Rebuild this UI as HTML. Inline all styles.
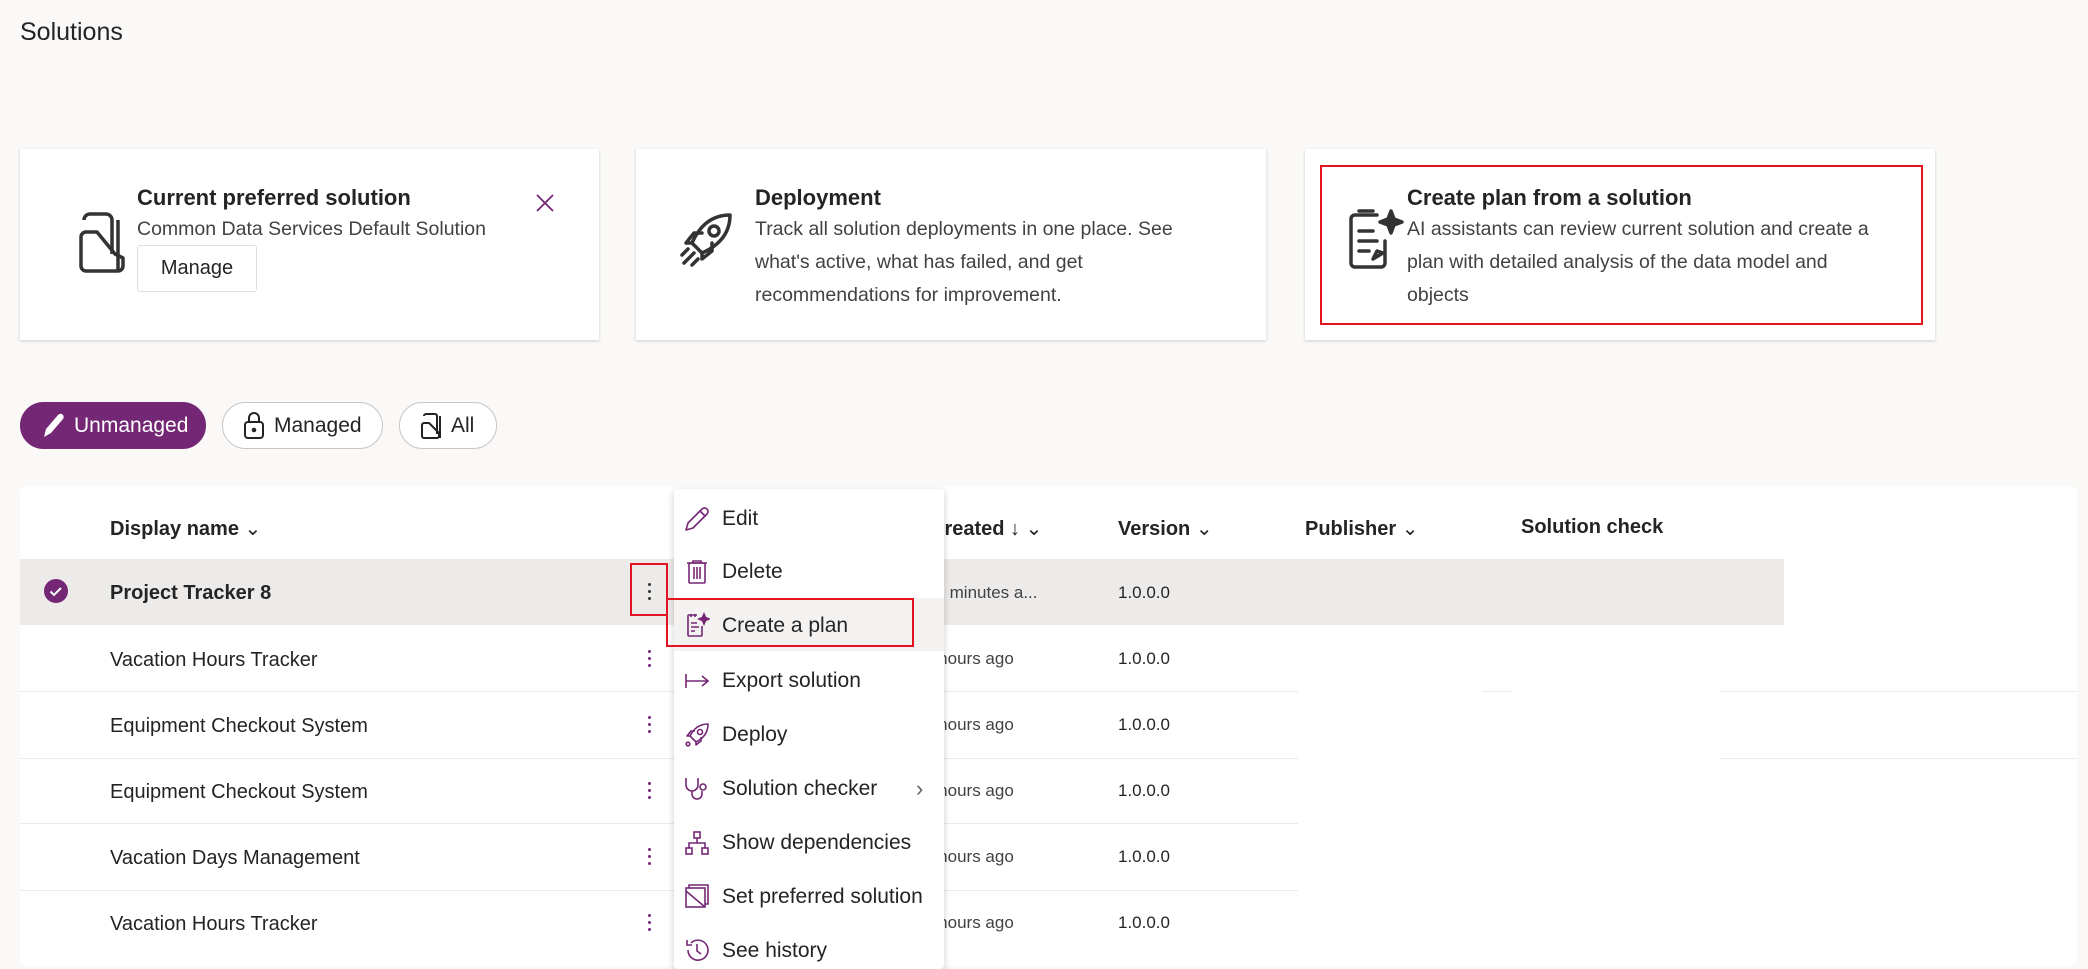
<!DOCTYPE html>
<html><head><meta charset="utf-8"><style>
*{margin:0;padding:0;box-sizing:border-box}
body{width:2088px;height:960px;overflow:hidden;background:#faf9f8;font-family:"Liberation Sans",sans-serif;color:#242424;position:relative}
.a{position:absolute;white-space:nowrap}
.card{position:absolute;top:149px;height:191px;background:#fff;box-shadow:0 1px 3px rgba(0,0,0,.18)}
.t{font-size:22px;font-weight:bold;color:#242424}
.s{font-size:19.5px;color:#424242;line-height:33px}
.pill{position:absolute;top:402px;height:47px;border-radius:24px;border:1px solid #c8c6c4;background:#fff;font-size:21px;display:flex;align-items:center;gap:9px;padding-left:20px}
.hd{font-size:20px;font-weight:bold;top:514px}
.cell{font-size:20px}
.sm{font-size:17px;color:#424242}
.dots{position:absolute;left:648px;width:4px}
.dots i{display:block;width:3px;height:3px;background:#742774;border-radius:50%;margin:4px 0}
.mi{position:absolute;left:722px;font-size:21px;color:#242424}
.ic{position:absolute;left:684px}
</style></head><body>
<div class="a" style="left:20px;top:18px;font-size:25px">Solutions</div>

<div class="card" style="left:20px;width:579px">
 <svg class="a" style="left:58px;top:63px" width="54" height="62" viewBox="0 0 54 62" fill="none" stroke="#333" stroke-width="3.5" stroke-linejoin="round"><path d="M6 8a6 6 0 0 1 6-6h16a6 6 0 0 1 6 6v34"/><path d="M40 8v50"/><path d="M3 28v26a5 5 0 0 0 5 5h32a5 5 0 0 0 5-5v-8l-8-4-18-22H8a5 5 0 0 0-5 5z"/></svg>
 <div class="a t" style="left:117px;top:36px">Current preferred solution</div>
 <div class="a s" style="left:117px;top:64px">Common Data Services Default Solution</div>
 <div class="a" style="left:117px;top:96px;width:120px;height:47px;border:1px solid #e1dfdd;border-radius:3px;font-size:20px;display:flex;align-items:center;justify-content:center">Manage</div>
 <svg class="a" style="left:515px;top:44px" width="20" height="20" viewBox="0 0 20 20" stroke="#742774" stroke-width="1.8"><path d="M2 2L18 18M18 2L2 18"/></svg>
</div>

<div class="card" style="left:636px;width:630px">
 <svg class="a" style="left:42px;top:62px" width="56" height="56" viewBox="0 0 56 56" fill="none" stroke="#333" stroke-width="3.5" stroke-linecap="round" stroke-linejoin="round"><path d="M20 38L14 32C22 14 34 4 52 4C52 22 42 34 24 42Z"/><circle cx="36" cy="20" r="5"/><path d="M14 32l-6 0 8-10 8 0M24 42v6l10-8v-8"/><path d="M4 44l6-6M6 52l10-10M14 54l6-6"/></svg>
 <div class="a t" style="left:119px;top:36px">Deployment</div>
 <div class="a s" style="left:119px;top:64px">Track all solution deployments in one place. See<br>what's active, what has failed, and get<br>recommendations for improvement.</div>
</div>

<div class="card" style="left:1305px;width:630px">
 <div class="a" style="left:15px;top:16px;width:603px;height:160px;border:2.5px solid #e3131f"></div>
 <svg class="a" style="left:42px;top:58px" width="58" height="64" viewBox="0 0 58 64" fill="none" stroke="#333" stroke-width="3.5" stroke-linecap="round" stroke-linejoin="round"><path d="M30 8H8a4 4 0 0 0-4 4v44a4 4 0 0 0 4 4h26a4 4 0 0 0 4-4V34"/><path d="M12 4h14M12 24h14M12 34h18M12 44h10"/><path d="M26 52l4-8 6 2z"/><path d="M44 4l3 8 8 3-8 3-3 8-3-8-8-3 8-3z" fill="#333"/></svg>
 <div class="a t" style="left:102px;top:36px">Create plan from a solution</div>
 <div class="a s" style="left:102px;top:64px">AI assistants can review current solution and create a<br>plan with detailed analysis of the data model and<br>objects</div>
</div>

<div class="pill" style="left:20px;width:186px;background:#742774;border-color:#742774;color:#fff"><svg width="24" height="26" viewBox="0 0 24 26"><path d="M3 24l2-8L17 2a3 3 0 0 1 5 4L10 20z" fill="#fff"/></svg>Unmanaged</div>
<div class="pill" style="left:222px;width:161px"><svg width="22" height="28" viewBox="0 0 22 28" fill="none" stroke="#242424" stroke-width="2"><rect x="2" y="10" width="18" height="16" rx="3"/><path d="M6 10V6a5 5 0 0 1 10 0v4"/><circle cx="11" cy="18" r="1.3" fill="#242424"/></svg>Managed</div>
<div class="pill" style="left:399px;width:98px"><svg width="22" height="28" viewBox="0 0 22 28" fill="none" stroke="#242424" stroke-width="2" stroke-linejoin="round"><path d="M4 4a2 2 0 0 1 2-2h9a2 2 0 0 1 2 2v18M20 4v22"/><path d="M2 13v11a2 2 0 0 0 2 2h13a2 2 0 0 0 2-2v-3L9 11H4a2 2 0 0 0-2 2z"/></svg>All</div>

<div class="a" style="left:20px;top:486px;width:2057px;height:480px;background:#fff;border-radius:6px"></div>
<div class="a" style="left:20px;top:559px;width:1764px;height:66px;background:#edebe9"></div>
<div class="a" style="left:20px;top:691px;width:1278px;height:1px;background:#edebe9"></div>
<div class="a" style="left:20px;top:758px;width:1278px;height:1px;background:#edebe9"></div>
<div class="a" style="left:20px;top:823px;width:1278px;height:1px;background:#edebe9"></div>
<div class="a" style="left:20px;top:890px;width:1278px;height:1px;background:#edebe9"></div>
<div class="a" style="left:1482px;top:691px;width:30px;height:1px;background:#edebe9"></div>
<div class="a" style="left:1720px;top:691px;width:357px;height:1px;background:#edebe9"></div>
<div class="a" style="left:1720px;top:758px;width:357px;height:1px;background:#edebe9"></div>

<div class="a hd" style="left:110px;top:516px">Display name <span style="font-weight:normal">&#8964;</span></div>
<div class="a hd" style="left:930px;top:516px">Created <span style="font-weight:normal">&#8595; &#8964;</span></div>
<div class="a hd" style="left:1118px;top:516px">Version <span style="font-weight:normal">&#8964;</span></div>
<div class="a hd" style="left:1305px;top:516px">Publisher <span style="font-weight:normal">&#8964;</span></div>
<div class="a hd" style="left:1521px;top:516px">Solution check</div>

<svg class="a" style="left:43px;top:578px" width="26" height="26" viewBox="0 0 26 26"><circle cx="13" cy="13" r="12" fill="#742774"/><path d="M7.5 13.5l3.5 3.5 7-7" stroke="#fff" stroke-width="2" fill="none"/></svg>
<div class="a cell" style="left:110px;top:582px;font-weight:bold">Project Tracker 8</div>
<div class="a cell" style="left:110px;top:649px">Vacation Hours Tracker</div>
<div class="a cell" style="left:110px;top:715px">Equipment Checkout System</div>
<div class="a cell" style="left:110px;top:781px">Equipment Checkout System</div>
<div class="a cell" style="left:110px;top:847px">Vacation Days Management</div>
<div class="a cell" style="left:110px;top:913px">Vacation Hours Tracker</div>

<div class="dots" style="top:579px"><i style="background:#333"></i><i style="background:#333"></i><i style="background:#333"></i></div>
<div class="dots" style="top:646px"><i></i><i></i><i></i></div>
<div class="dots" style="top:712px"><i></i><i></i><i></i></div>
<div class="dots" style="top:778px"><i></i><i></i><i></i></div>
<div class="dots" style="top:844px"><i></i><i></i><i></i></div>
<div class="dots" style="top:910px"><i></i><i></i><i></i></div>
<div class="a" style="left:630px;top:563px;width:38px;height:53px;border:2.5px solid #e3131f"></div>

<div class="a sm" style="left:926px;top:583px">12 minutes a...</div>
<div class="a sm" style="left:924px;top:649px">2 hours ago</div>
<div class="a sm" style="left:924px;top:715px">2 hours ago</div>
<div class="a sm" style="left:924px;top:781px">2 hours ago</div>
<div class="a sm" style="left:924px;top:847px">2 hours ago</div>
<div class="a sm" style="left:924px;top:913px">2 hours ago</div>
<div class="a sm" style="left:1118px;top:583px;color:#242424">1.0.0.0</div>
<div class="a sm" style="left:1118px;top:649px;color:#242424">1.0.0.0</div>
<div class="a sm" style="left:1118px;top:715px;color:#242424">1.0.0.0</div>
<div class="a sm" style="left:1118px;top:781px;color:#242424">1.0.0.0</div>
<div class="a sm" style="left:1118px;top:847px;color:#242424">1.0.0.0</div>
<div class="a sm" style="left:1118px;top:913px;color:#242424">1.0.0.0</div>

<div class="a" style="left:674px;top:489px;width:270px;height:480px;background:#fff;border-radius:4px;box-shadow:0 2px 8px rgba(0,0,0,.2)"></div>
<div class="a" style="left:674px;top:598px;width:270px;height:53px;background:#f3f2f1"></div>
<div class="a" style="left:666px;top:598px;width:248px;height:49px;border:2.5px solid #e3131f"></div>

<svg class="ic" style="top:506px" width="26" height="26" viewBox="0 0 26 26" fill="none" stroke="#742774" stroke-width="1.6" stroke-linejoin="round"><path d="M2 24l2-7L18 3a3 3 0 0 1 5 5L9 22z"/><path d="M16 5l5 5"/></svg>
<div class="mi" style="top:507px">Edit</div>
<svg class="ic" style="top:559px" width="26" height="26" viewBox="0 0 26 26" fill="none" stroke="#742774" stroke-width="1.6"><path d="M3 4h20M9 4V2h8v2"/><rect x="5" y="4" width="16" height="20" rx="1"/><path d="M10 8v12M13 8v12M16 8v12"/></svg>
<div class="mi" style="top:560px">Delete</div>
<svg class="ic" style="top:612px" width="26" height="26" viewBox="0 0 26 26" fill="none" stroke="#742774" stroke-width="1.6"><path d="M13 3H5a1 1 0 0 0-1 1v19a1 1 0 0 0 1 1h12a1 1 0 0 0 1-1v-9"/><path d="M7 2v3M11 2v3M7 11h6M7 15h8M7 19h4"/><path d="M20 2l1.5 3.5L25 7l-3.5 1.5L20 12l-1.5-3.5L15 7l3.5-1.5z" fill="#742774"/></svg>
<div class="mi" style="top:614px">Create a plan</div>
<svg class="ic" style="top:668px" width="26" height="26" viewBox="0 0 26 26" fill="none" stroke="#742774" stroke-width="1.6"><path d="M2 6v14M2 13h22M18 8l6 5-6 5"/></svg>
<div class="mi" style="top:669px">Export solution</div>
<svg class="ic" style="top:722px" width="26" height="26" viewBox="0 0 26 26" fill="none" stroke="#742774" stroke-width="1.6" stroke-linejoin="round"><path d="M9 17l-3-3C10 6 16 2 24 2c0 8-4 14-12 18z"/><circle cx="16" cy="10" r="2.5"/><path d="M6 14H3l4-5h4M12 20v3l5-4v-4"/><circle cx="4" cy="22" r="1.8"/></svg>
<div class="mi" style="top:723px">Deploy</div>
<svg class="ic" style="top:776px" width="26" height="26" viewBox="0 0 26 26" fill="none" stroke="#742774" stroke-width="1.6"><path d="M2 2v7a6 6 0 0 0 12 0V2"/><path d="M8 15v3a5 5 0 0 0 10 0v-3"/><circle cx="19" cy="11" r="3"/></svg>
<div class="mi" style="top:777px">Solution checker</div>
<div class="a" style="left:916px;top:776px;font-size:22px;color:#616161">&#8250;</div>
<svg class="ic" style="top:830px" width="26" height="26" viewBox="0 0 26 26" fill="none" stroke="#742774" stroke-width="1.6"><rect x="10" y="2" width="6" height="6"/><rect x="2" y="18" width="6" height="6"/><rect x="18" y="18" width="6" height="6"/><path d="M13 8v5M5 18v-5h16v5"/></svg>
<div class="mi" style="top:831px">Show dependencies</div>
<svg class="ic" style="top:883px" width="26" height="26" viewBox="0 0 26 26" fill="none" stroke="#742774" stroke-width="1.6"><path d="M5 5V2h19v19h-3"/><rect x="2" y="5" width="19" height="19"/><path d="M2 8l19 16"/></svg>
<div class="mi" style="top:885px">Set preferred solution</div>
<svg class="ic" style="top:937px" width="26" height="26" viewBox="0 0 26 26" fill="none" stroke="#742774" stroke-width="1.6"><path d="M4 13a10 10 0 1 0 3-7"/><path d="M3 3v5h5M13 7v7l4 3"/></svg>
<div class="mi" style="top:939px">See history</div>
</body></html>
